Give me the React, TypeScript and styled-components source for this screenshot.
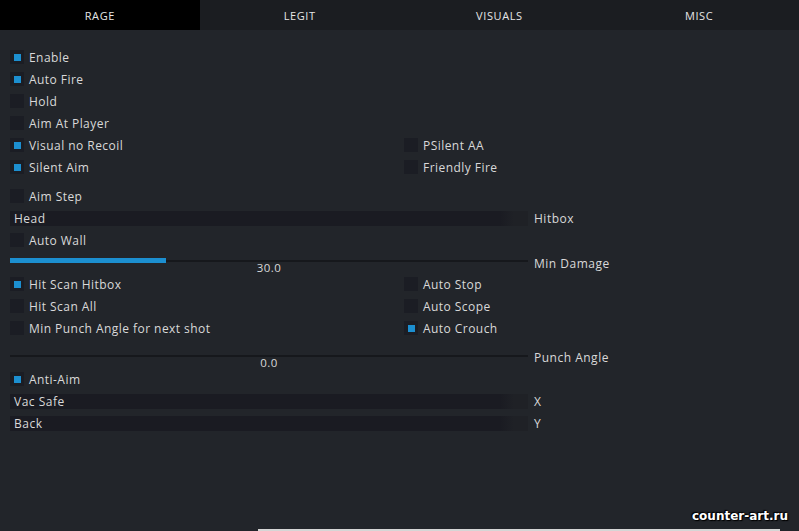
import * as React from "react";
import styled, { createGlobalStyle } from "styled-components";

const GlobalStyle = createGlobalStyle`
  html, body {
    margin: 0;
    padding: 0;
    background: #22252a;
  }
  #root {
    width: 799px;
    height: 531px;
    overflow: hidden;
  }
`;

const Window = styled.div`
  position: relative;
  width: 799px;
  height: 531px;
  background: #22252a;
  font-family: "Open Sans", "DejaVu Sans", sans-serif;
  color: #d9d9d9;
  overflow: hidden;
`;

const TabBar = styled.div`
  display: flex;
  height: 30px;
  background: #1b1d21;
`;

const Tab = styled.div<{ $active?: boolean }>`
  flex: 1;
  display: flex;
  align-items: center;
  justify-content: center;
  font-size: 11px;
  letter-spacing: 0.6px;
  color: #e6e6e6;
  background: ${p => (p.$active ? "#000" : "transparent")};
`;

const Content = styled.div`
  display: flex;
  flex-direction: column;
  padding: 16px 0 0 10px;
`;

const Row = styled.div<{ $gap?: number }>`
  display: grid;
  grid-template-columns: 394px 1fr;
  align-items: center;
  height: 22px;
  margin-top: ${p => p.$gap || 0}px;
`;

const Check = styled.div`
  display: flex;
  align-items: center;
  gap: 5px;
  font-size: 12px;
  letter-spacing: 0.45px;
  white-space: nowrap;
`;

const Box = styled.span<{ $on?: boolean }>`
  width: 14px;
  height: 14px;
  background: #1b1d24;
  display: flex;
  align-items: center;
  justify-content: center;
  &::after {
    content: "";
    width: 7px;
    height: 7px;
    background: ${p => (p.$on ? "#1c8fd0" : "transparent")};
  }
`;

const ComboRow = styled.div`
  display: flex;
  align-items: center;
  height: 22px;
`;

const Combo = styled.div`
  width: 514px;
  height: 15px;
  padding-left: 4px;
  display: flex;
  align-items: center;
  font-size: 12px;
  letter-spacing: 0.5px;
  background: linear-gradient(to right, #1a1b22 0, #1a1b22 490px, #1f2126 504px, #1f2126 100%);
`;

const SideLabel = styled.span<{ $dy?: number }>`
  margin-left: 6px;
  font-size: 12px;
  letter-spacing: 0.5px;
  position: relative;
  top: ${p => p.$dy || 0}px;
`;

const SliderBlock = styled.div<{ $top: number }>`
  position: relative;
  height: ${p => p.$top + 12}px;
  display: flex;
  align-items: flex-start;
  padding-top: ${p => p.$top - 7}px;
  box-sizing: border-box;
`;

const SliderArea = styled.div`
  position: relative;
  width: 518px;
  height: 14px;
  display: flex;
  align-items: center;
`;

const Track = styled.div`
  position: relative;
  width: 100%;
  height: 2px;
  background: #16181c;
`;

const Fill = styled.div`
  position: absolute;
  left: 0;
  top: -2px;
  height: 5px;
  background: #1c8fd0;
`;

const Value = styled.span`
  position: absolute;
  left: 0;
  right: 0;
  top: 8px;
  text-align: center;
  font-size: 11.5px;
  letter-spacing: 0.5px;
  line-height: 12px;
`;

const Watermark = styled.div`
  position: absolute;
  right: 11px;
  bottom: 8px;
  font-family: "DejaVu Sans", sans-serif;
  font-weight: bold;
  font-size: 12px;
  color: #fff;
  text-shadow: 0 0 2px #000, 1px 1px 1px #000, -1px -1px 1px #000;
`;

const BottomStrip = styled.div`
  position: absolute;
  left: 258px;
  right: 19px;
  bottom: 0;
  height: 2px;
  background: #d6d6d6;
`;

const CheckItem = ({ label, on }: { label: string; on?: boolean }) => (
  <Check>
    <Box $on={on} />
    {label}
  </Check>
);

const Slider = ({
  top,
  pct,
  value,
  label,
  dy
}: {
  top: number;
  pct: number;
  value: string;
  label: string;
  dy: number;
}) => (
  <SliderBlock $top={top}>
    <SliderArea>
      <Track>
        <Fill style={{ width: `${pct}%` }} />
      </Track>
      <Value>{value}</Value>
    </SliderArea>
    <SideLabel $dy={dy}>{label}</SideLabel>
  </SliderBlock>
);

export default function App() {
  const tabs = ["RAGE", "LEGIT", "VISUALS", "MISC"];
  return (
    <Window>
      <GlobalStyle />
      <TabBar>
        {tabs.map((t, i) => (
          <Tab key={t} $active={i === 0}>
            {t}
          </Tab>
        ))}
      </TabBar>
      <Content>
        <Row><CheckItem label="Enable" on /></Row>
        <Row><CheckItem label="Auto Fire" on /></Row>
        <Row><CheckItem label="Hold" /></Row>
        <Row><CheckItem label="Aim At Player" /></Row>
        <Row>
          <CheckItem label="Visual no Recoil" on />
          <CheckItem label="PSilent AA" />
        </Row>
        <Row>
          <CheckItem label="Silent Aim" on />
          <CheckItem label="Friendly Fire" />
        </Row>
        <Row $gap={7}><CheckItem label="Aim Step" /></Row>
        <ComboRow>
          <Combo>Head</Combo>
          <SideLabel>Hitbox</SideLabel>
        </ComboRow>
        <Row><CheckItem label="Auto Wall" /></Row>
        <Slider top={10} pct={30.1} value="30.0" label="Min Damage" dy={1} />
        <Row>
          <CheckItem label="Hit Scan Hitbox" on />
          <CheckItem label="Auto Stop" />
        </Row>
        <Row>
          <CheckItem label="Hit Scan All" />
          <CheckItem label="Auto Scope" />
        </Row>
        <Row>
          <CheckItem label="Min Punch Angle for next shot" />
          <CheckItem label="Auto Crouch" on />
        </Row>
        <Slider top={17} pct={0} value="0.0" label="Punch Angle" dy={0} />
        <Row><CheckItem label="Anti-Aim" on /></Row>
        <ComboRow>
          <Combo>Vac Safe</Combo>
          <SideLabel>X</SideLabel>
        </ComboRow>
        <ComboRow>
          <Combo>Back</Combo>
          <SideLabel>Y</SideLabel>
        </ComboRow>
      </Content>
      <Watermark>counter-art.ru</Watermark>
      <BottomStrip />
    </Window>
  );
}
